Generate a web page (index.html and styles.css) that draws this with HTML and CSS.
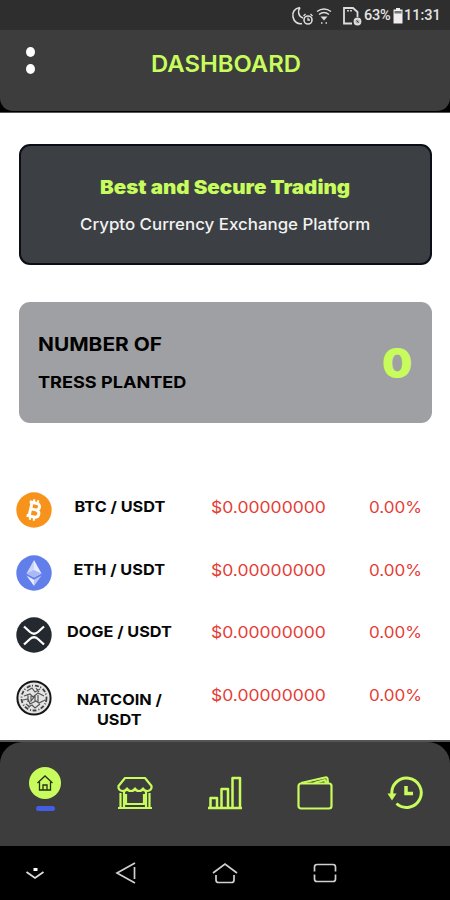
FILE: index.html
```html
<!DOCTYPE html>
<html lang="en">
<head>
<meta charset="utf-8">
<title>Dashboard</title>
<link rel="stylesheet" href="styles.css">
</head>
<body>
<div class="statusbar">
  <svg width="24" height="22" viewBox="0 0 24 22" fill="none" stroke="#ddd" stroke-width="1.6"><path d="M9 2.500C3.500 3.500 1 7 2 12c1 5 5 7.500 9 6.500M9 2.500C6.500 6 7 11 12 13"/><circle cx="17" cy="15" r="4"/><path d="M17 12.500V15h2M12.500 11l2-2M19.500 9l2 2" stroke-width="1.300"/></svg>
  <svg width="18" height="18" viewBox="0 0 18 18" fill="none" stroke="#ddd" stroke-width="1.5"><path d="M2 4.500q7-5 14 0M4 7.500q5-4 10 0"/><path d="M5.500 9.500h7l-3.500 4z" fill="#ddd" stroke="none"/><path d="M6 16h1.500M10.500 16H12"/></svg>
  <svg class="sim" width="20" height="20" viewBox="0 0 20 20" fill="none" stroke="#ddd" stroke-width="1.8"><path d="M10 17.500H2V2h9l4.500 4v5M6 5.500V4M9 5.500V4"/><circle cx="15.500" cy="15.500" r="3" fill="#aaa"/><path d="m14.500 14.500 2 2" stroke="#333" stroke-width="1"/></svg>
  <span>63%</span>
  <svg width="10" height="16" viewBox="0 0 10 16"><path d="M3 0h4v1.500h2.500V15.500H.5V1.500H3z" fill="#eee"/><path d="M1.500 3h7v2.500h-7z" fill="#777"/></svg>
  <span class="time">11:31</span>
</div>
<header class="header-wrap"><div class="header">
  <div class="menu"><i></i><i></i></div>
  <h1><span class="fit f-title">DASHBOARD</span></h1>
</div></header>
<main>
  <section class="card hero">
    <h2><span class="fit f-best">Best and Secure Trading</span></h2>
    <p><span class="fit f-sub">Crypto Currency Exchange Platform</span></p>
  </section>
  <section class="card trees">
    <div class="labels"><div class="number"><span class="fit f-number">NUMBER OF</span></div><div class="tress"><span class="fit f-tress">TRESS PLANTED</span></div></div>
    <div class="count"><span class="fit f-count">0</span></div>
  </section>
  <section class="market">
    <div class="row">
      <svg width="36" height="36" viewBox="0 0 36 36"><circle cx="18" cy="18" r="17.700" fill="#f7931a"/><g transform="rotate(13 18 18)" fill="none" stroke="#fff"><path d="M12 11h7.500a3.200 3.200 0 0 1 0 6.500H15h5.500a3.700 3.700 0 0 1 0 7.300H12M14.500 11v13.500" stroke-width="3"/><path d="M16 7.500V11M20 7.500V11M16 25v3.500M20 25v3.500" stroke-width="2"/></g></svg>
      <div class="pair"><span class="fit f-pair">BTC / USDT</span></div><div class="price"><span class="fit f-price">$0.00000000</span></div><div class="pct"><span class="fit f-pct">0.00%</span></div>
    </div>
    <div class="row">
      <svg width="36" height="36" viewBox="0 0 36 36"><circle cx="18" cy="18" r="17.700" fill="#627eea"/><path d="M18 5v17.500l-7.500-4z" fill="#cbd4fa"/><path d="m18 5 7.500 13.500-7.500 4z" fill="#e7ebfd"/><path d="m10.500 18.500 7.500-3.400 7.500 3.400-7.500 4z" fill="#aab9f5"/><path d="m10.500 20.500 7.500 4.300V31z" fill="#e7ebfd"/><path d="m25.500 20.500-7.500 4.300V31z" fill="#bdc9f8"/></svg>
      <div class="pair"><span class="fit f-pair">ETH / USDT</span></div><div class="price"><span class="fit f-price">$0.00000000</span></div><div class="pct"><span class="fit f-pct">0.00%</span></div>
    </div>
    <div class="row">
      <svg width="36" height="36" viewBox="0 0 36 36"><circle cx="18" cy="18" r="17.700" fill="#23292f"/><path d="m8 9.500 6 5.500q4 3.500 8 0l6-5.500M8 27.500l6-5.500q4-3.500 8 0l6 5.500" fill="none" stroke="#fff" stroke-width="2.300"/></svg>
      <div class="pair"><span class="fit f-pair">DOGE / USDT</span></div><div class="price"><span class="fit f-price">$0.00000000</span></div><div class="pct"><span class="fit f-pct">0.00%</span></div>
    </div>
    <div class="row">
      <svg width="36" height="36" viewBox="0 0 36 36" fill="none"><circle cx="18" cy="18" r="16.600" fill="#e4e4e4" stroke="#161616" stroke-width="2"/><circle cx="18" cy="18" r="12.500" stroke="#444" stroke-width="1.800" stroke-dasharray="4 1.500 1 2"/><path d="M11 11l5-3 3 4 5-3M8 16l6-2 3 3 5-4 6 3M7 20l5-1 2 5 6-3 3 2 6-3M12 27l4-2 3 3 5-4M12 14v8M15 16v5l4-5v6M22 15v7M20 8l3 4M10 24l4 3" stroke="#555" stroke-width="1.200"/></svg>
      <div class="pair wrapped"><span class="fit f-pair">NATCOIN /<br>USDT</span></div><div class="price"><span class="fit f-price">$0.00000000</span></div><div class="pct"><span class="fit f-pct">0.00%</span></div>
    </div>
  </section>
</main>
<div class="nav-wrap"><nav>
  <div class="home"><div class="disc"><svg width="18" height="18" viewBox="0 0 18 18" fill="none" stroke="#263017" stroke-width="1.300"><path d="M1.500 9 9 2l7.500 7M3.500 8v8h11V8M7 16v-5h4v5"/></svg></div><b></b></div>
  <svg width="36" height="34" viewBox="0 0 36 34" fill="none" stroke="#c8fc5c" stroke-width="2.200" stroke-linejoin="round"><path d="M8 2h20l6.500 8v2q-1 3-4.500 3-3 0-4-2.500-1 2.500-4 2.500t-4-2.500q-1 2.500-4 2.500t-4-2.500Q9 15 6 15q-3.500 0-4.500-3v-2zM3.500 17v15M7 16v16M29 16v16M32.500 17v15M1 32h34M9 18v10h18V18"/></svg>
  <svg width="36" height="34" viewBox="0 0 36 34" fill="none" stroke="#c8fc5c" stroke-width="2.500" stroke-linejoin="round"><path d="M1 32h34M3.500 32V22H10v10M14.500 32V13H21v19M25.500 32V2H33v30"/></svg>
  <svg width="36" height="34" viewBox="0 0 36 34" fill="none" stroke="#c8fc5c" stroke-width="2.200" stroke-linejoin="round"><rect x="1.500" y="7.500" width="33" height="25" rx="2.500"/><path d="m4 7 24-5.500q2-.5 2.500 1L31 7M17 7l11-3 1 3"/></svg>
  <svg width="36" height="34" viewBox="0 0 36 34" fill="none" stroke="#c8fc5c" stroke-width="3"><path d="M5 19A14.700 14.700 0 1 1 9.500 27.500"/><path d="M.5 17.500h9L5 24.500z" fill="#c8fc5c" stroke="none"/><path d="M19 10v7.500h7" stroke-width="3.500"/></svg>
</nav></div>
<footer>
  <svg width="20" height="16" viewBox="0 0 20 16" fill="none" stroke="#ddd" stroke-width="1.800"><path d="m1.500 7 8.500 6L18.500 7"/><path d="M8.500 3h4v3h-4z" fill="#fff" stroke="none"/></svg>
  <svg class="back" width="22" height="22" viewBox="0 0 22 22" fill="none" stroke="#d0d0d0" stroke-width="1.700"><path d="M20 1 2 11l18 10M19.500 5v12"/></svg>
  <svg width="26" height="22" viewBox="0 0 26 22" fill="none" stroke="#d0d0d0" stroke-width="1.700"><path d="m1 11 12-9 12 9M4 13v5q0 2.500 2.500 2.500h13Q22 20.500 22 18v-5"/></svg>
  <svg width="24" height="20" viewBox="0 0 24 20" fill="none" stroke="#d0d0d0" stroke-width="1.700"><path d="M1.500 8.500V4q0-2.500 2.500-2.500h16q2.500 0 2.500 2.500v4.500M1.500 11.500V16q0 2.500 2.500 2.500h16q2.500 0 2.500-2.500v-4.500"/></svg>
</footer>
</body>
</html>
```
FILE: styles.css
```css
* { box-sizing: border-box; margin: 0; padding: 0; }
body { width: 450px; height: 900px; display: flex; flex-direction: column; background: #fff; font-family: Inter, sans-serif; overflow: hidden; }
svg { display: block; flex: none; }
.fit { display: inline-block; white-space: nowrap; transform-origin: left center; }
.f-title { transform: scaleX(1.037); }
.f-best { transform: scaleX(1.083); }
.f-sub { transform: scaleX(1.055); }
.f-number { transform: scaleX(1.098); }
.f-tress { transform: scaleX(1.097); }
.f-count { transform: scaleX(1.04); }
.f-price { transform: scaleX(1.13); }
.f-pct { transform: scaleX(1.1); }
.statusbar { height: 30px; flex: none; background: #2e2e2e; display: flex; align-items: center; justify-content: flex-end; padding: 1px 9px 0 0; color: #e4e4e4; font: 500 14.5px/30px Roboto, sans-serif; }
.statusbar .sim { margin: 0 2px 0 9px; }
.statusbar span { width: 29px; letter-spacing: -0.3px; white-space: nowrap; padding-top: 1px; }
.statusbar .time { width: 37px; margin-left: 1px; letter-spacing: 0; }
.header-wrap { height: 83px; flex: none; background: #000; border-bottom: 1px solid #555; }
.header { height: 81px; background: #3d3d3d; border-radius: 0 0 13px 13px; display: flex; align-items: flex-start; }
.menu { display: flex; flex-direction: column; gap: 7px; padding: 17px 0 0 26px; width: 151px; }
.menu i { width: 9px; height: 10px; border-radius: 50%; background: #fff; }
h1 { font-size: 23px; line-height: 28px; font-weight: 600; color: #c8fc5c; padding-top: 20px; }
main { height: 627px; flex: none; padding: 31px 18px 0 19px; overflow: hidden; }
.card { border-radius: 11px; width: 413px; }
.hero { height: 121px; background: #3c4044; border: 2px solid #0b0e18; padding-top: 29px; }
h2 { padding-left: 79px; font-size: 19px; line-height: 26px; font-weight: 900; color: #c8fc5c; }
.hero p { padding-left: 59px; margin-top: 12px; font-size: 16px; line-height: 22px; font-weight: 500; color: #f2f2f2; }
.trees { height: 121px; margin-top: 37px; background: #9fa0a4; display: flex; justify-content: space-between; padding-left: 19px; color: #000; }
.number { margin-top: 30px; font-size: 19px; line-height: 26px; font-weight: 700; }
.tress { margin-top: 13px; font-size: 16.5px; line-height: 22px; font-weight: 700; }
.count { width: 50px; margin-top: 36px; font-size: 41px; line-height: 50px; font-weight: 900; color: #c8fc5c; }
.market { padding-top: 69px; margin-left: -3px; }
.row { display: grid; grid-template-columns: 36px 159px 158px 70px; height: 62.500px; align-items: start; }
.pair { display: flex; justify-content: center; text-align: center; font-size: 15px; line-height: 20px; font-weight: 700; color: #080808; padding-top: 5px; width: 135px; }
.pair .fit { transform: scaleX(1.085); transform-origin: center; }
.pair.wrapped { padding-top: 10px; }
.price, .pct { font-size: 15.500px; line-height: 20px; color: #e63b35; padding-top: 6px; font-weight: 400; }
.nav-wrap { height: 106px; flex: none; background: #000; border-top: 2px solid #555; }
nav { height: 104px; background: #3d3d3d; border-radius: 22px 22px 0 0; display: grid; grid-template-columns: repeat(5, 90px); justify-items: center; padding-top: 34px; }
.home { display: flex; flex-direction: column; align-items: center; margin-top: -9px; }
.disc { width: 32px; height: 32px; border-radius: 50%; background: #c8fc5c; display: grid; place-items: center; }
.home b { width: 19px; height: 5px; margin-top: 7px; border-radius: 3px; background: #415ee5; }
footer { height: 54px; flex: none; background: #000; display: grid; grid-template-columns: 70px 110px 90px 110px; justify-items: center; align-items: center; }
.back { margin-left: 2px; }
```
